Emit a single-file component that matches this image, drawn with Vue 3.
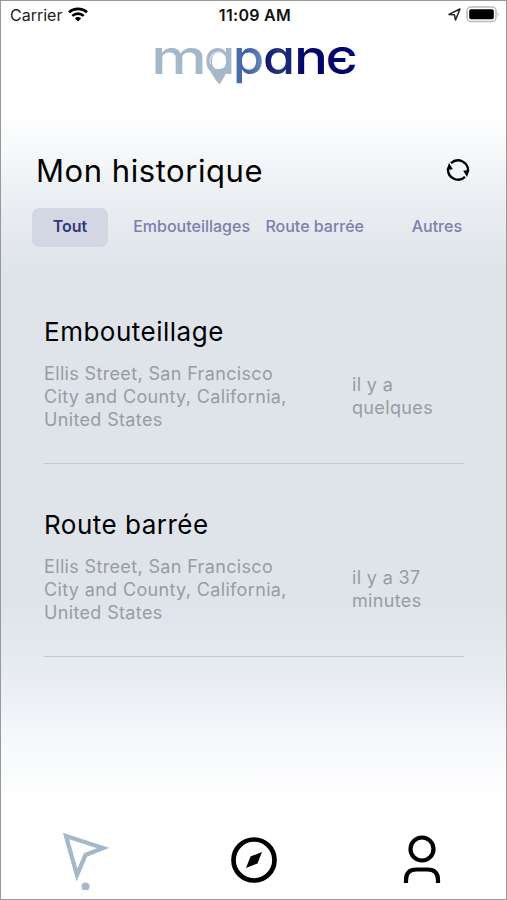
<script setup>
import { ref, computed } from "vue";

const filters = [
  { id: "all", label: "Tout" },
  { id: "traffic", label: "Embouteillages" },
  { id: "closed", label: "Route barrée" },
  { id: "other", label: "Autres" },
];

const events = [
  {
    id: 1,
    type: "traffic",
    title: "Embouteillage",
    address: "Ellis Street, San Francisco City and County, California, United States",
    time: "il y a quelques",
  },
  {
    id: 2,
    type: "closed",
    title: "Route barrée",
    address: "Ellis Street, San Francisco City and County, California, United States",
    time: "il y a 37 minutes",
  },
];

const activeFilter = ref("all");

const visibleEvents = computed(() =>
  activeFilter.value === "all"
    ? events
    : events.filter((e) => e.type === activeFilter.value)
);
</script>

<template>
  <div class="screen">
    <div class="status-bar">
      <div class="status-left">
        <span>Carrier</span>
        <svg class="wifi" width="20" height="15" viewBox="0 0 20 15">
          <path d="M1 5.300C6 .8 14 .8 19 5.300" fill="none" stroke="#000" stroke-width="2.700" />
          <path d="M4.300 8.900C7.500 5.900 12.500 5.900 15.700 8.900" fill="none" stroke="#000" stroke-width="2.600" />
          <path d="M6.800 11.200Q10 8.800 13.200 11.200L10 14.500Z" />
        </svg>
      </div>
      <div class="status-time">11:09 AM</div>
      <div class="status-right">
        <svg width="13" height="13" viewBox="0 0 13 13">
          <path d="M1 6.400L12 1L7.500 12L6.400 6.700Z" fill="none" stroke="#222" stroke-width="1.500" stroke-linejoin="round" />
        </svg>
        <svg class="battery" width="34" height="17" viewBox="0 0 34 17">
          <rect x="1" y="1" width="29" height="14.500" rx="4" fill="#fff" stroke="#bbb" stroke-width="1.500" />
          <rect x="3.200" y="3.200" width="24.600" height="10" rx="1.800" />
          <path d="M31.600 6Q33.800 8 31.600 10.500Z" fill="#bbb" />
        </svg>
      </div>
    </div>

    <div class="logo">
      <svg width="216" height="66" viewBox="-6 -12 216 66" aria-label="mapane">
        <defs>
          <linearGradient id="brand" gradientUnits="userSpaceOnUse" x1="78" y1="0" x2="150" y2="0">
            <stop offset="0" stop-color="#a5b8ca" />
            <stop offset="0.060" stop-color="#4c70ae" />
            <stop offset="0.200" stop-color="#3c5fa6" />
            <stop offset="0.400" stop-color="#6585b4" />
            <stop offset="0.460" stop-color="#10136c" />
            <stop offset="0.650" stop-color="#26397f" />
            <stop offset="1" stop-color="#03056a" />
          </linearGradient>
        </defs>
        <g class="letters" fill="url(#brand)">
          <text x="-3" y="34" textLength="56" lengthAdjust="spacingAndGlyphs">m</text>
          <text x="50" y="34" textLength="31" lengthAdjust="spacingAndGlyphs">a</text>
          <text x="79" y="34" textLength="31" lengthAdjust="spacingAndGlyphs">p</text>
          <text x="109" y="34" textLength="32" lengthAdjust="spacingAndGlyphs">a</text>
          <text x="140" y="34" textLength="34" lengthAdjust="spacingAndGlyphs">n</text>
          <text class="last" x="172" y="34" textLength="31" lengthAdjust="spacingAndGlyphs">Є</text>
        </g>
        <path d="M53 23C56 32 60 38 65.500 44.500C70 38 73 33 75 23C71 31 57 31 53 23Z" fill="#a5b8ca" />
        <path d="M56.500 24A9 9 0 0 1 68 12.500" fill="none" stroke="#dce4eb" stroke-width="1.200" />
      </svg>
    </div>

    <div class="header">
      <h1>Mon historique</h1>
      <svg width="24" height="24" viewBox="0 0 24 24">
        <path d="M5 5.200A10 10 0 0 1 21.800 14M19 18.800A10 10 0 0 1 2.200 10" fill="none" stroke="#000" stroke-width="2.300" />
        <path d="M0.500 12L3 5L6.800 11.200ZM23.500 12L21 19L17.200 12.800Z" />
      </svg>
    </div>

    <div class="filters">
      <button
        v-for="filter in filters"
        :key="filter.id"
        :class="['filter', filter.id, { active: activeFilter === filter.id }]"
        @click="activeFilter = filter.id"
      >
        {{ filter.label }}
      </button>
    </div>

    <div class="event-list">
      <div class="event" v-for="event in visibleEvents" :key="event.id">
        <h2>{{ event.title }}</h2>
        <div class="event-body">
          <p class="address">{{ event.address }}</p>
          <p class="time">{{ event.time }}</p>
        </div>
      </div>
    </div>

    <div class="tab-bar">
      <svg width="48" height="60" viewBox="0 0 48 60">
        <path d="M5 6L42 18L24.500 25L16 45Z" fill="none" stroke="#a5b8ca" stroke-width="4.300" />
        <circle cx="24.500" cy="56.500" r="4" fill="#a5b8ca" />
      </svg>
      <svg class="compass" width="48" height="48" viewBox="0 0 48 48">
        <circle cx="24" cy="24" r="20.500" fill="none" stroke="#000" stroke-width="4.700" />
        <path d="M32 16L27.500 27.500L16 32L20.500 20.500Z" />
      </svg>
      <svg width="38" height="50" viewBox="0 0 38 50">
        <circle cx="19" cy="14" r="11.500" fill="none" stroke="#000" stroke-width="4.200" />
        <path d="M3 48V45Q3 34.500 13.500 34.500H24.500Q35 34.500 35 45V48" fill="none" stroke="#000" stroke-width="4.200" />
      </svg>
    </div>
  </div>
</template>

<style>
body {
  margin: 0;
}
</style>

<style scoped>
.screen {
  box-sizing: border-box;
  width: 507px;
  height: 900px;
  border: 1px solid #999;
  display: flex;
  flex-direction: column;
  font-family: Inter, sans-serif;
  background: linear-gradient(
    #fff 0,
    #fff 110px,
    #f5f7f9 155px,
    #e9edf1 210px,
    #dfe4eb 270px,
    #dfe4eb 600px,
    #e6ebf1 665px,
    #f5f7fa 735px,
    #fff 800px
  );
}

.status-bar {
  height: 27px;
  display: grid;
  grid-template-columns: 1fr auto 1fr;
  align-items: center;
  padding: 0 6px 0 9px;
  font-size: 16px;
  color: #222;
}

.status-left,
.status-right {
  display: flex;
  align-items: center;
}

.status-left {
  gap: 6px;
}

.status-right {
  justify-content: flex-end;
  gap: 5px;
}

.status-time {
  font-weight: 600;
  letter-spacing: 0.3px;
  color: #111;
}

.logo {
  height: 60px;
  padding-left: 147px;
  box-sizing: border-box;
}

.letters {
  font-size: 48px;
  font-weight: 500;
  font-feature-settings: "cv11";
}

.last {
  font-size: 37px;
  font-weight: 600;
}

.header {
  display: flex;
  justify-content: space-between;
  align-items: center;
  height: 40px;
  padding: 0 36px 0 35px;
  margin-top: 62px;
}

h1 {
  margin: 0;
  font-size: 31px;
  font-weight: 400;
  letter-spacing: 0.55px;
}

.filters {
  display: grid;
  grid-template-columns: 76px 142px 114px 98px;
  align-items: center;
  padding: 0 31px;
  height: 39px;
  margin-top: 18px;
}

.filter {
  height: 39px;
  padding: 0 0 3px;
  border: 0;
  border-radius: 7px;
  background: none;
  font-family: inherit;
  font-size: 16px;
  font-weight: 500;
  line-height: 36px;
  color: #7c80ad;
  text-align: right;
  white-space: nowrap;
}

.filter.all {
  text-align: center;
}

.filter.active {
  background: #d3d7e3;
  color: #34387e;
  font-weight: 600;
}

.event-list {
  padding: 46px 42px 0 43px;
}

.event {
  box-sizing: border-box;
  height: 193px;
  padding-top: 45px;
  border-bottom: 1px solid #c3c8cd;
}

.event:first-child {
  height: 171px;
  padding-top: 23px;
}

h2 {
  margin: 0;
  font-size: 26px;
  line-height: 32px;
  font-weight: 400;
  letter-spacing: 0.5px;
}

.event-body {
  display: flex;
  align-items: center;
  margin-top: 14px;
  font-size: 18px;
  line-height: 23px;
  letter-spacing: 0.35px;
  color: #989ca1;
}

.address {
  margin: 0;
  width: 250px;
}

.time {
  margin: 0 0 2px 58px;
  width: 90px;
}

.tab-bar {
  display: flex;
  justify-content: space-between;
  align-items: center;
  height: 70px;
  margin-top: auto;
  padding: 0 65px 4px 60px;
}

.compass {
  margin-right: 5px;
}
</style>
